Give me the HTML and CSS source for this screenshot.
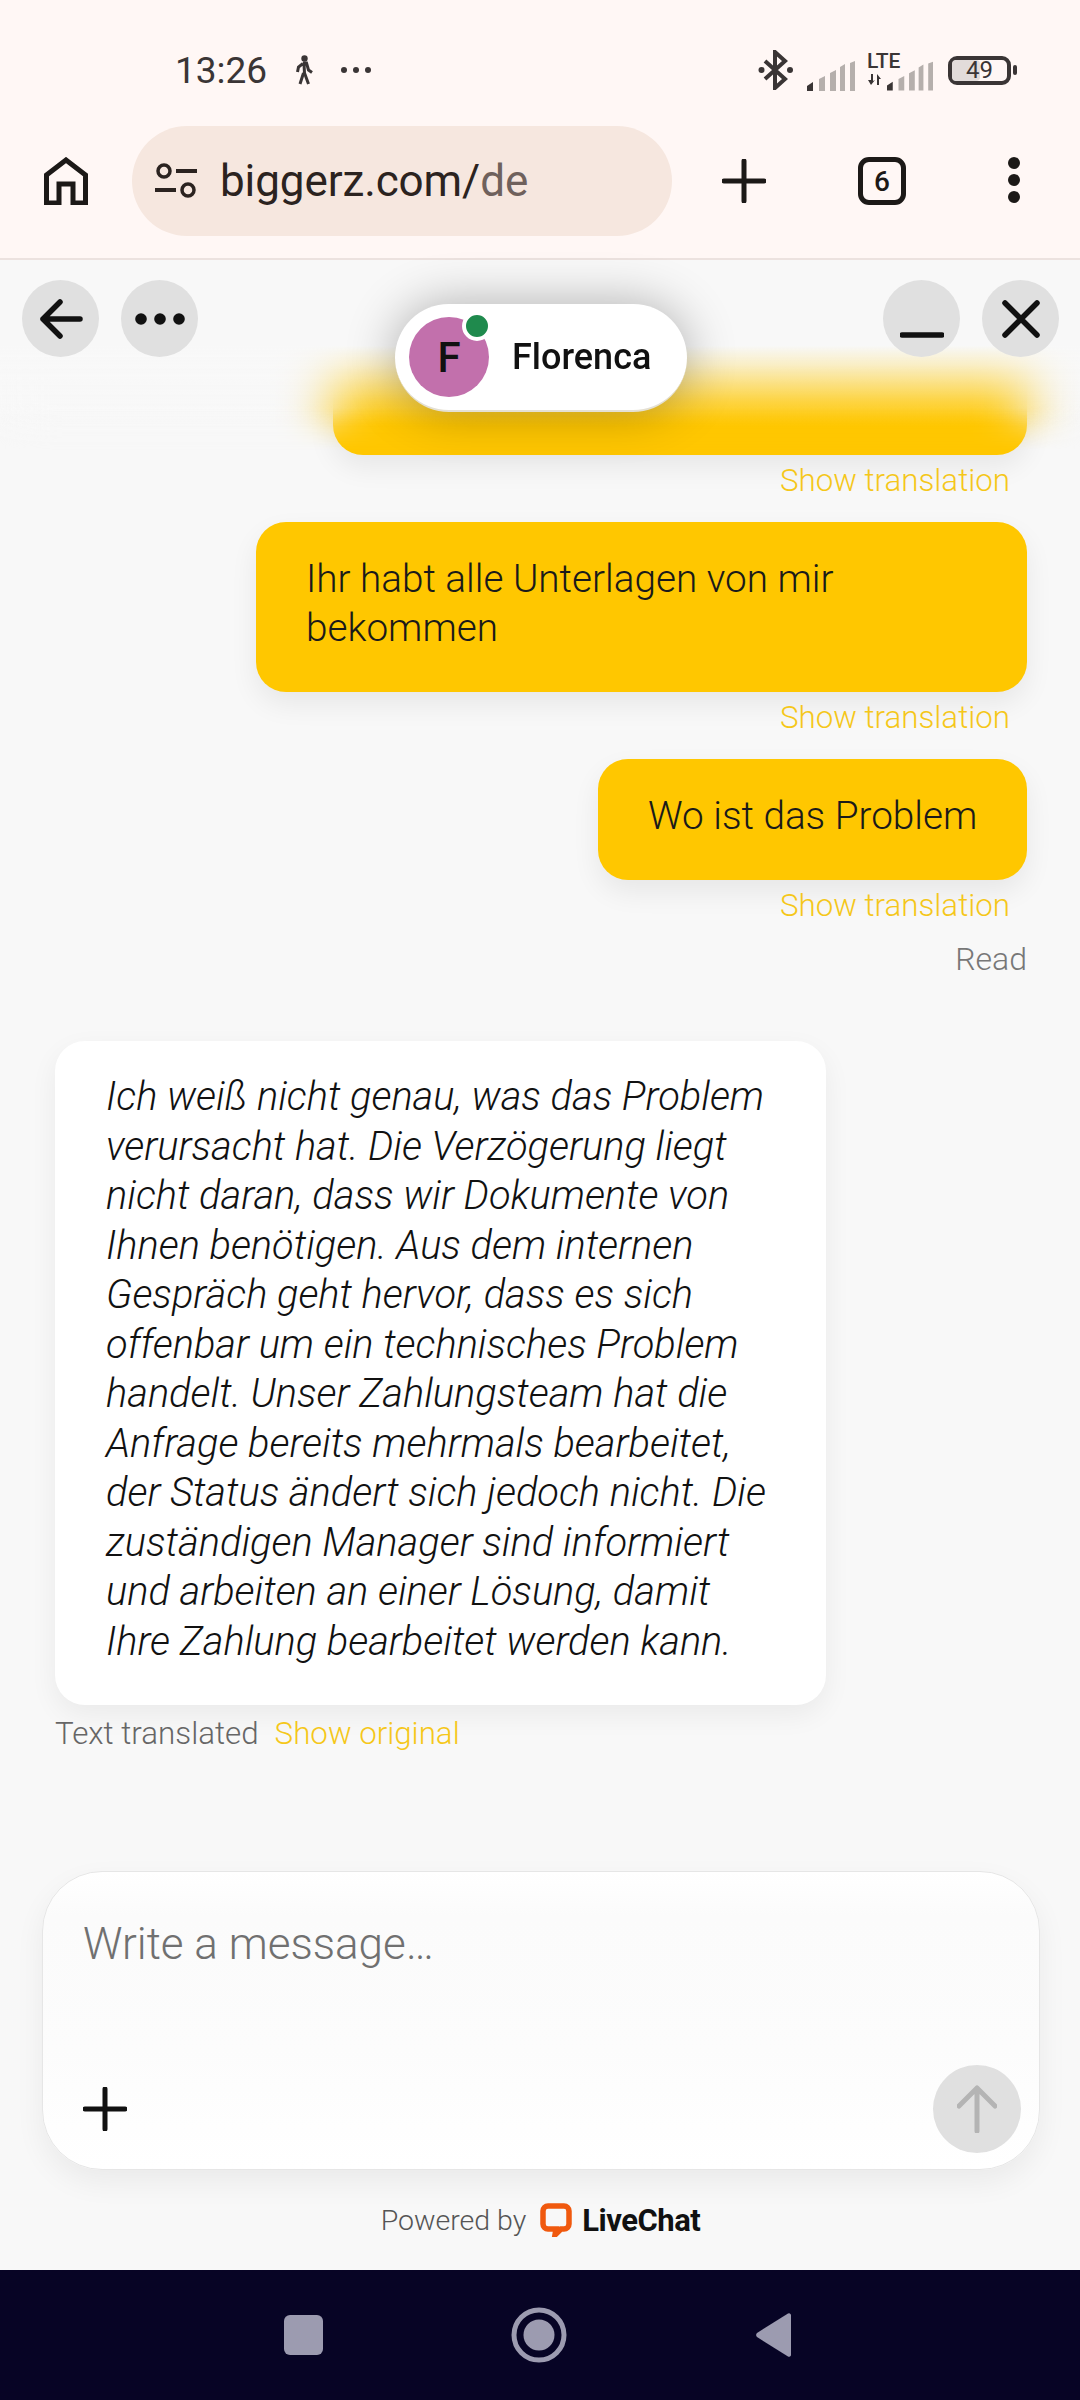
FILE: index.html
```html
<!DOCTYPE html>
<html lang="de">
<head>
<meta charset="utf-8">
<title>biggerz.com/de</title>
<link rel="stylesheet" href="styles.css">
</head>
<body>
<div class="phone">
  <div class="status">
    <div class="status-left">
      <span class="clock">13:26</span>
      <svg class="walker" viewBox="0 0 18 30"><circle cx="9.5" cy="3.5" r="3.2" fill="#3a3535"/><path d="M8 8h3.5l2 7 3.500 2.500M8 8.500 3.500 12l-1 5M9 9l.5 9 4 11M8.500 18 5 29" fill="none" stroke="#3a3535" stroke-width="3"/></svg>
      <span class="sdots"><i></i><i></i><i></i></span>
    </div>
    <div class="status-right">
      <svg class="bt" viewBox="0 0 36 40"><path d="M7 11 27 29 17 38V2l10 9L7 29" fill="none" stroke="#3a3535" stroke-width="4"/><circle cx="3.500" cy="20" r="3" fill="#3a3535"/><circle cx="32" cy="20" r="3" fill="#3a3535"/></svg>
      <svg class="sig" viewBox="0 0 48 30"><path d="M0 25l6-4v9H0z" fill="#3a3535"/><path d="M12 18l6-3v15h-6zM23 12l6-3v21h-6zM33 6l5-3v27h-5zM43 2l5-2v30h-5z" fill="#b5afac"/></svg>
      <span class="lte-box"><span class="lte">LTE</span><svg class="arrows" viewBox="0 0 17 11"><path d="M4 0h2v7l2-1-4 5-3-5h3zM10 0l4 5h-2v6h-2z" fill="#3a3535"/></svg></span>
      <svg class="sig sig2" viewBox="0 0 48 30"><path d="M0 25l6-4v9H0z" fill="#3a3535"/><path d="M12 18l6-3v15h-6zM23 12l6-3v21h-6zM33 6l5-3v27h-5zM43 2l5-2v30h-5z" fill="#b5afac"/></svg>
      <div class="battery"><span class="level"></span><span class="bat-num">49</span></div>
      <span class="nub"></span>
    </div>
  </div>

  <div class="toolbar">
    <svg class="home" viewBox="0 0 44 48"><path d="M2.500 46V18L22 3l19.500 15v28H29V27H15v19z" fill="none" stroke="#1c1917" stroke-width="5"/></svg>
    <div class="url">
      <svg class="tune" viewBox="0 0 42 36"><circle cx="9" cy="8" r="6" fill="none" stroke="#2b2320" stroke-width="3.500"/><path d="M21 8h21M0 27h21" stroke="#2b2320" stroke-width="4" fill="none"/><circle cx="33" cy="27" r="6" fill="none" stroke="#2b2320" stroke-width="3.500"/></svg>
      <span class="url-text">biggerz.com/<span class="url-path">de</span></span>
    </div>
    <svg class="t-plus" viewBox="0 0 44 44"><path d="M22 2v40M2 22h40" stroke="#1c1917" stroke-width="5" stroke-linecap="round"/></svg>
    <div class="tabs">6</div>
    <div class="kebab"><i></i><i></i><i></i></div>
  </div>

  <main class="main">
    <div class="chat">
      <div class="bubble b-first"></div>
      <div class="caption right">Show translation</div>
      <div class="bubble b-second">Ihr habt alle Unterlagen von mir bekommen</div>
      <div class="caption right">Show translation</div>
      <div class="bubble b-third">Wo ist das Problem</div>
      <div class="caption right">Show translation</div>
      <div class="read">Read</div>
      <div class="agent">Ich weiß nicht genau, was das Problem verursacht hat. Die Verzögerung liegt nicht daran, dass wir Dokumente von Ihnen benötigen. Aus dem internen Gespräch geht hervor, dass es sich offenbar um ein technisches Problem handelt. Unser Zahlungsteam hat die Anfrage bereits mehrmals bearbeitet, der Status ändert sich jedoch nicht. Die zuständigen Manager sind informiert und arbeiten an einer Lösung, damit Ihre Zahlung bearbeitet werden kann.</div>
      <div class="agent-meta"><span class="muted">Text translated</span><span class="link">Show original</span></div>
    </div>

    <div class="composer">
      <div class="placeholder">Write a message…</div>
      <div class="composer-row">
        <svg class="c-plus" viewBox="0 0 44 44"><path d="M22 2v40M2 22h40" stroke="#111" stroke-width="5" stroke-linecap="round"/></svg>
        <div class="send"><svg viewBox="0 0 40 48"><path d="M20 46V3M2 21 20 3l18 18" fill="none" stroke="#b4b4b4" stroke-width="5" stroke-linecap="round" stroke-linejoin="round"/></svg></div>
      </div>
    </div>
    <div class="powered">
      <span class="p-by">Powered by</span>
      <svg class="lc-logo" viewBox="0 0 32 34"><path d="M8 3h16a5 5 0 0 1 5 5v13a5 5 0 0 1-5 5h-3l-6 6 1-6H8a5 5 0 0 1-5-5V8a5 5 0 0 1 5-5z" fill="none" stroke="#f0590e" stroke-width="5.500"/></svg>
      <span class="p-name">LiveChat</span>
    </div>

    <div class="fade"></div>
    <header class="head">
      <div class="head-group">
        <button class="round"><svg class="i-back" viewBox="0 0 44 40"><path d="M41 20H4M21 3 4 20l17 17" fill="none" stroke="#111" stroke-width="5.500" stroke-linecap="round" stroke-linejoin="round"/></svg></button>
        <button class="round"><svg class="i-more" viewBox="0 0 50 12"><circle cx="6" cy="6" r="5.800" fill="#111"/><circle cx="25" cy="6" r="5.800" fill="#111"/><circle cx="44" cy="6" r="5.800" fill="#111"/></svg></button>
      </div>
      <div class="head-group">
        <button class="round"><svg class="i-min" viewBox="0 0 44 44"><path d="M2 38h40" stroke="#111" stroke-width="5.500" stroke-linecap="round"/></svg></button>
        <button class="round"><svg class="i-close" viewBox="0 0 40 40"><path d="M4 4l32 32M36 4 4 36" stroke="#111" stroke-width="5.500" stroke-linecap="round"/></svg></button>
      </div>
    </header>
    <div class="pill">
      <div class="avatar">F<span class="online"></span></div>
      <span class="agent-name">Florenca</span>
    </div>
  </main>

  <nav class="nav">
    <span class="nav-square"></span>
    <svg class="nav-home" viewBox="0 0 56 56"><circle cx="28" cy="28" r="25" fill="none" stroke="#9c9bb0" stroke-width="5"/><circle cx="28" cy="28" r="15.500" fill="#9c9bb0"/></svg>
    <svg class="nav-back" viewBox="0 0 38 46"><path d="M36 3v40a2 2 0 0 1-3 1.500L2 25a3 3 0 0 1 0-4L33 1.500A2 2 0 0 1 36 3z" fill="#9c9bb0"/></svg>
  </nav>
</div>
</body>
</html>
```

FILE: styles.css
```css
* { box-sizing: border-box; }
html, body { margin: 0; padding: 0; }
body { font-family: Roboto, "Liberation Sans", sans-serif; background: #f8f8f8; }
.phone { width: 1080px; height: 2400px; display: flex; flex-direction: column; overflow: hidden; }

.status { height: 125px; flex: none; background: #fff7f5; display: flex; justify-content: space-between; align-items: center; padding: 15px 63px 0 175px; color: #3a3535; }
.status-left { display: flex; align-items: center; }
.clock { font-size: 37px; width: 92px; white-space: nowrap; }
.walker { width: 18px; height: 30px; margin-left: 28px; }
.sdots { display: flex; gap: 6px; margin-left: 28px; }
.sdots i { width: 6px; height: 6px; border-radius: 50%; background: #3a3535; }
.status-right { display: flex; align-items: center; }
.bt { width: 36px; height: 40px; }
.sig { width: 48px; height: 30px; margin-left: 13px; margin-top: 12px; }
.sig2 { width: 46px; margin-left: -14px; }
.lte-box { display: flex; flex-direction: column; margin-left: 12px; width: 34px; height: 36px; }
.lte { font-size: 21px; font-weight: 500; line-height: 18px; }
.arrows { width: 17px; height: 11px; margin-top: 4px; }
.battery { position: relative; width: 63px; height: 29px; margin-left: 15px; border: 4px solid #3a3535; border-radius: 9px; }
.level { display: block; width: 28px; height: 100%; background: #e2dcda; border-radius: 4px; }
.bat-num { position: absolute; left: 14px; top: -4px; font-size: 24px; line-height: 29px; }
.nub { width: 4px; height: 10px; background: #3a3535; margin-left: 2px; border-radius: 2px; }

.toolbar { height: 135px; flex: none; background: #fff7f5; border-bottom: 2px solid #ece2df; display: flex; align-items: flex-start; padding-top: 1px; position: relative; }
.home { width: 44px; height: 48px; margin: 31px 0 0 44px; }
.url { width: 540px; height: 110px; margin-left: 44px; background: #f6e7df; border-radius: 55px; display: flex; align-items: center; padding-left: 23px; }
.tune { width: 42px; height: 36px; }
.url-text { margin-left: 23px; font-size: 44px; color: #2b2320; font-weight: 400; letter-spacing: -.1px; }
.url-path { color: #6f615c; }
.t-plus { width: 44px; height: 44px; margin: 33px 0 0 50px; }
.tabs { width: 48px; height: 48px; margin: 31px 0 0 92px; border: 5px solid #1c1917; border-radius: 11px; font-size: 28px; font-weight: 500; display: flex; align-items: center; justify-content: center; color: #1c1917; }
.kebab { display: flex; flex-direction: column; gap: 5px; margin: 31px 0 0 102px; }
.kebab i { width: 12px; height: 12px; border-radius: 50%; background: #1c1917; }

.main { flex: 1; position: relative; display: flex; flex-direction: column; background: #f8f8f8; min-height: 0; }
.chat { height: 1611px; flex: none; padding: 0 53px 0 55px; display: flex; flex-direction: column; overflow: hidden; font-weight: 300; }
.bubble { align-self: flex-end; background: #ffc700; color: #1a1a1a; border-radius: 30px; padding: 32px 50px 40px; font-size: 38.700px; line-height: 49px; box-shadow: 0 12px 28px rgba(0,0,0,.07); }
.b-first { width: 694px; height: 195px; flex: none; }
.b-second { width: 771px; }
.b-third { width: 429px; white-space: nowrap; }
.caption { font-size: 31.300px; line-height: 40px; color: #f5c71a; margin: 6px 17px 21px 0; }
.right { align-self: flex-end; }
.read { align-self: flex-end; font-size: 32px; line-height: 40px; color: #777; margin-top: -8px; }
.agent { width: 771px; margin-top: 62px; background: #fff; border-radius: 30px; padding: 31px 50px 39px 51px; font-size: 39.800px; line-height: 49.500px; font-style: italic; color: #111; box-shadow: 0 10px 28px rgba(0,0,0,.06); }
.agent-meta { display: flex; gap: 16px; margin-top: 9px; font-size: 31.300px; line-height: 40px; }
.muted { color: #666; }
.link { color: #f5c71a; }

.composer { width: 998px; height: 299px; flex: none; margin-left: 42px; background: linear-gradient(#fff, #fbfbfb 15%, #fcfcfc 60%, #fff); border: 1.500px solid #e6e6e6; border-radius: 60px; box-shadow: 0 12px 30px rgba(0,0,0,.06); padding: 45px 18px 16px 40px; display: flex; flex-direction: column; justify-content: space-between; }
.placeholder { font-size: 44px; line-height: 54px; font-weight: 300; color: #707070; }
.composer-row { display: flex; justify-content: space-between; align-items: center; }
.c-plus { width: 44px; height: 44px; }
.send { width: 88px; height: 88px; border-radius: 50%; background: #e0e0e0; display: flex; align-items: center; justify-content: center; }
.send svg { width: 40px; height: 48px; }
.powered { flex: 1; display: flex; align-items: center; justify-content: center; padding: 0 0 0 1px; }
.p-by { font-size: 28.500px; font-weight: 300; color: #555; }
.lc-logo { width: 32px; height: 34px; margin-left: 14px; }
.p-name { font-size: 31px; font-weight: 700; color: #111; margin-left: 10px; letter-spacing: -.5px; }

.fade { position: absolute; left: 0; right: 0; top: 0; height: 190px; background: linear-gradient(#f8f8f8 45%, rgba(248,248,248,.8) 55%, rgba(248,248,248,.25) 75%, rgba(248,248,248,0) 88%); backdrop-filter: blur(26px); -webkit-mask-image: linear-gradient(#000 78%, transparent); mask-image: linear-gradient(#000 78%, transparent); }
.head { position: absolute; left: 22px; right: 21px; top: 20px; display: flex; justify-content: space-between; }
.head-group { display: flex; gap: 22px; }
.round { width: 77px; height: 77px; padding: 0; border: 0; border-radius: 50%; background: #e0e0e0; display: flex; align-items: center; justify-content: center; }
.i-back { width: 44px; height: 40px; }
.i-more { width: 50px; height: 12px; }
.i-min { width: 44px; height: 44px; }
.i-close { width: 40px; height: 40px; }
.pill { position: absolute; left: 395px; top: 44px; width: 292px; height: 108px; background: #fff; border-radius: 54px; border-bottom: 2px solid #e4e0d4; box-shadow: 0 0 50px rgba(0,0,0,.3); display: flex; align-items: center; padding-left: 14px; }
.avatar { position: relative; width: 80px; height: 80px; border-radius: 50%; background: #c270ac; color: #111; font-size: 42px; font-weight: 500; display: flex; align-items: center; justify-content: center; }
.online { position: absolute; right: -3px; top: -6px; width: 30px; height: 30px; border-radius: 50%; background: #1f8a4d; border: 4px solid #fff; }
.agent-name { margin-left: 23px; font-size: 36px; font-weight: 500; color: #111; }

.nav { height: 130px; flex: none; background: #070425; position: relative; display: block; }
.nav-square { position: absolute; left: 284px; top: 45px; width: 39px; height: 40px; background: #9c9bb0; border-radius: 6px; }
.nav-home { position: absolute; left: 511px; top: 37px; width: 56px; height: 56px; }
.nav-back { position: absolute; left: 755px; top: 42px; width: 38px; height: 46px; }
```
